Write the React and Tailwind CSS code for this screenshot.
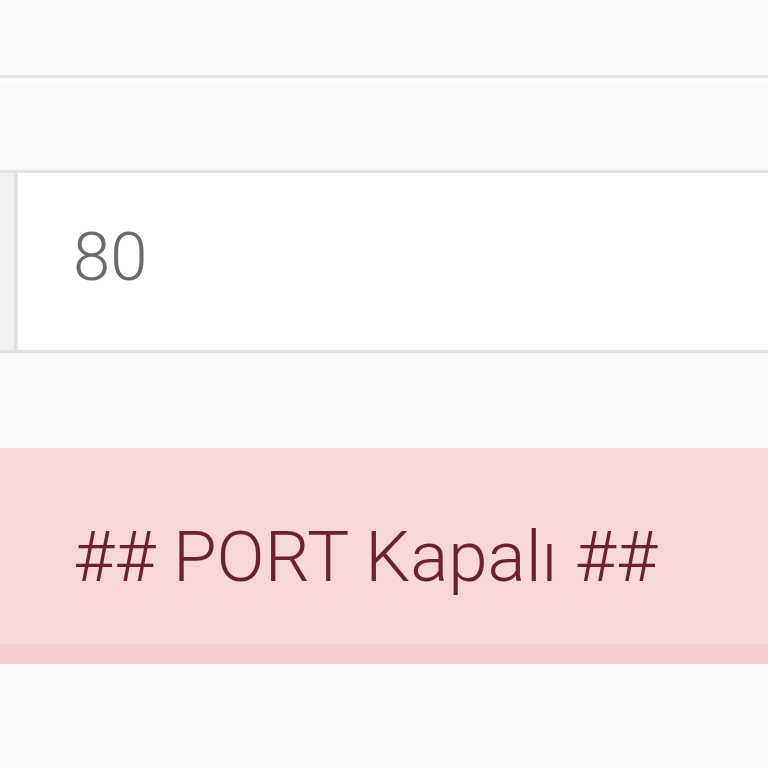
export default function App() {
  return (
    <div className="flex h-screen w-full flex-col overflow-hidden bg-[#f9f9f9] font-['Roboto',sans-serif]">
      <div className="h-[75px] shrink-0" />
      <div className="h-[3px] shrink-0 bg-[#e4e4e4]" />
      <div className="h-[92px] shrink-0 border-t-[6px] border-white bg-[#fafafa]" />

      <div className="flex h-[183px] shrink-0">
        <div className="w-[14px] shrink-0 border-y-[3px] border-[#e2e2e2] bg-[#f1f1f1]" />
        <div className="flex flex-1 items-center border-y-[3px] border-l-[4px] border-[#e2e2e2] bg-white pb-[8px] pl-[55px]">
          <span className="text-[67px] font-light leading-none text-[#6a6a6a]">80</span>
        </div>
      </div>

      <div className="h-[95px] shrink-0" />

      <div className="flex h-[216px] shrink-0 items-center border-b-[20px] border-[#f6cdd1] bg-[#f8d7da] pl-[73px] pt-[20px]">
        <span className="text-[71px] font-light leading-none text-[#6a2230]">## PORT Kapalı ##</span>
      </div>
    </div>
  )
}
